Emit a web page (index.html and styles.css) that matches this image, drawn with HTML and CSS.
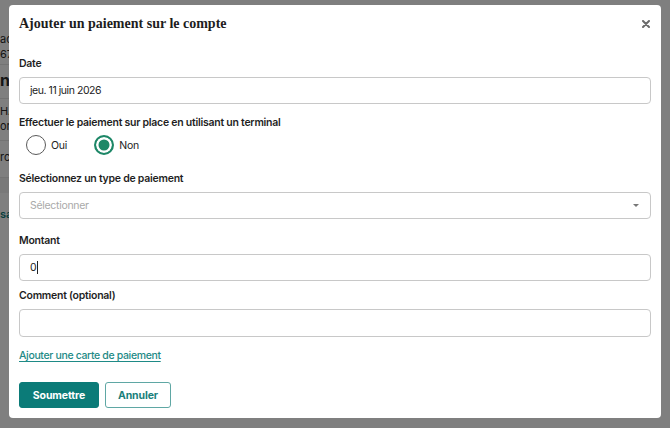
FILE: index.html
```html
<!DOCTYPE html>
<html lang="fr">
<head>
<meta charset="utf-8">
<title>Ajouter un paiement</title>
<link rel="stylesheet" href="styles.css">
</head>
<body>
<div class="page">
  <div class="bg-line bg-first">acompte</div>
  <div class="bg-line bg-next">6767</div>
  <div class="bg-title">nt</div>
  <div class="bg-line bg-after-title">HAUT</div>
  <div class="bg-line bg-next">ordre</div>
  <div class="bg-line bg-third">rcs</div>
  <div class="bg-band"></div>
  <div class="bg-link">sa</div>
</div>
<div class="overlay"></div>
<div class="modal">
  <div class="modal-header">
    <h1 class="modal-title">Ajouter un paiement sur le compte</h1>
    <span class="close" aria-label="Fermer"><svg width="8" height="8" viewBox="0 0 8 8"><path d="M1 1 L7 7 M7 1 L1 7" stroke="#6b6b6b" stroke-width="2" stroke-linecap="round"/></svg></span>
  </div>
  <div class="field">
    <label class="label">Date</label>
    <div class="input">jeu. 11 juin 2026</div>
  </div>
  <div class="field field-radio">
    <label class="label">Effectuer le paiement sur place en utilisant un terminal</label>
    <div class="radios">
      <span class="radio"><span class="circle"></span>Oui</span>
      <span class="radio"><span class="circle checked"></span>Non</span>
    </div>
  </div>
  <div class="field field-select">
    <label class="label">Sélectionnez un type de paiement</label>
    <div class="input select"><span class="placeholder">Sélectionner</span><span class="caret"></span></div>
  </div>
  <div class="field field-amount">
    <label class="label">Montant</label>
    <div class="input">0<span class="cursor"></span></div>
  </div>
  <div class="field field-comment">
    <label class="label">Comment (optional)</label>
    <div class="input tall"></div>
  </div>
  <a class="link" href="#">Ajouter une carte de paiement</a>
  <div class="actions">
    <button class="btn btn-primary">Soumettre</button>
    <button class="btn btn-secondary">Annuler</button>
  </div>
</div>
</body>
</html>
```

FILE: styles.css
```css
* { box-sizing: border-box; }
html, body { margin: 0; padding: 0; }
body {
  width: 670px;
  height: 428px;
  overflow: hidden;
  background: #ffffff;
  font-family: Inter, "Noto Sans", sans-serif;
  color: #222;
}
.page {
  width: 9px;
  overflow: hidden;
  white-space: nowrap;
  font-size: 11px;
  color: #2a2a2a;
}
.bg-line {
  line-height: 11px;
}
.bg-first { margin-top: 34px; }
.bg-next { margin-top: 4px; }
.bg-title {
  margin-top: 4px;
  border-top: 1px solid #e6e6e6;
  padding-top: 5px;
  font-size: 16px;
  font-weight: 700;
  line-height: 20px;
}
.bg-after-title {
  margin-top: 8px;
  border-top: 1px solid #e6e6e6;
  padding-top: 7px;
}
.bg-third {
  margin-top: 8px;
  border-top: 1px solid #e6e6e6;
  padding-top: 11px;
}
.bg-band {
  margin-top: 14px;
  height: 16px;
  background: #f2f2f2;
  border-top: 1px solid #e6e6e6;
}
.bg-link {
  margin-top: 16px;
  line-height: 11px;
  color: #0e7c7b;
  font-weight: 600;
}
.overlay {
  position: fixed;
  inset: 0;
  background: rgba(0, 0, 0, 0.5);
}
.modal {
  position: fixed;
  left: 9px;
  top: 5px;
  width: 652px;
  height: 413px;
  background: #fff;
  border-radius: 4px;
  padding: 11px 10px 10px 10px;
  display: flex;
  flex-direction: column;
}
.modal-header {
  display: flex;
  justify-content: space-between;
  align-items: center;
  height: 16px;
  margin-bottom: 25px;
}
.modal-title {
  margin: 0;
  font-family: "Liberation Serif", "DejaVu Serif", serif;
  font-weight: 700;
  font-size: 14px;
  line-height: 16px;
  color: #1d1d1d;
}
.close {
  display: flex;
  margin-right: 1px;
}
.field {
  display: flex;
  flex-direction: column;
}
.label {
  font-size: 10.5px;
  font-weight: 600;
  line-height: 14px;
  letter-spacing: -0.25px;
  color: #1f1f1f;
  margin-bottom: 6px;
}
.input {
  height: 27px;
  border: 1px solid #c8c8c8;
  border-radius: 4px;
  padding: 0 10px;
  display: flex;
  align-items: center;
  font-size: 10.5px;
  letter-spacing: -0.45px;
  color: #222;
}
.input.tall { height: 28px; }
.field-radio { margin-top: 12px; }
.field-radio .label { margin-bottom: 5px; }
.radios {
  display: flex;
  gap: 27px;
  padding-left: 7px;
  height: 20px;
  align-items: center;
}
.radio {
  display: flex;
  align-items: center;
  gap: 5px;
  font-size: 10.5px;
  letter-spacing: -0.2px;
  color: #222;
}
.circle {
  width: 20px;
  height: 20px;
  border-radius: 50%;
  border: 1.5px solid #5a5a5a;
  background: #fff;
}
.circle.checked {
  border: 2px solid #1d8767;
  box-shadow: inset 0 0 0 2.5px #fff;
  background: #1d8767;
}
.field-select { margin-top: 17px; }
.select {
  justify-content: space-between;
}
.placeholder { color: #a9a9a9; letter-spacing: -0.3px; }
.caret {
  width: 0;
  height: 0;
  border-left: 3px solid transparent;
  border-right: 3px solid transparent;
  border-top: 3px solid #777;
  margin-right: 1px;
}
.field-amount { margin-top: 15px; }
.cursor {
  display: inline-block;
  width: 1px;
  height: 13px;
  background: #222;
  margin-left: 1px;
}
.field-comment { margin-top: 8px; }
.link {
  margin-top: 12px;
  font-size: 10.5px;
  line-height: 14px;
  font-weight: 500;
  letter-spacing: -0.35px;
  color: #1e8a86;
  text-decoration: underline;
  text-underline-offset: 2px;
  align-self: flex-start;
}
.actions {
  margin-top: 19px;
  display: flex;
  gap: 6px;
}
.btn {
  height: 26px;
  border-radius: 3px;
  font-family: Inter, "Noto Sans", sans-serif;
  font-size: 10.5px;
  font-weight: 700;
  letter-spacing: -0.1px;
  padding: 0;
  cursor: pointer;
}
.btn-primary {
  width: 80px;
  background: #0b7b78;
  border: 1px solid #0b7b78;
  color: #fff;
}
.btn-secondary {
  width: 66px;
  background: #fff;
  border: 1px solid #5fa7a4;
  color: #1b7f7b;
}
```
